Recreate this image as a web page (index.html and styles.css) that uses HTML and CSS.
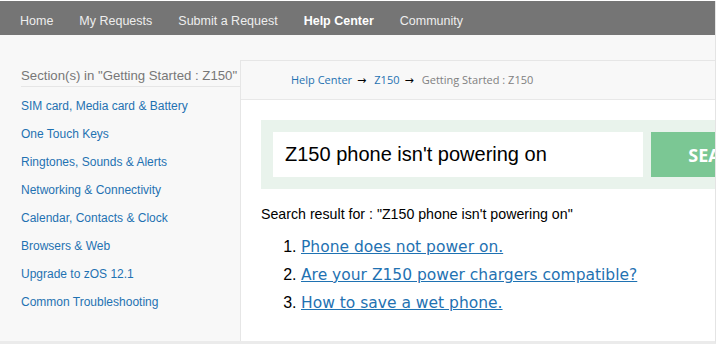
FILE: index.html
```html
<!DOCTYPE html>
<html lang="en">
<head>
    <meta charset="UTF-8">
    <meta name="viewport" content="width=device-width, initial-scale=1.0">
    <title>Help Center - Getting Started : Z150</title>
    <link rel="stylesheet" href="styles.css">
</head>
<body>

<div class="page">
    <nav class="topbar">
        <a href="#">Home</a>
        <a href="#">My Requests</a>
        <a href="#">Submit a Request</a>
        <a href="#" class="active">Help Center</a>
        <a href="#">Community</a>
    </nav>

    <div class="layout">
        <aside class="sidebar">
            <h3>Section(s) in "Getting Started : Z150"</h3>
            <ul class="sections">
                <li><a href="#">SIM card, Media card &amp; Battery</a></li>
                <li><a href="#">One Touch Keys</a></li>
                <li><a href="#">Ringtones, Sounds &amp; Alerts</a></li>
                <li><a href="#">Networking &amp; Connectivity</a></li>
                <li><a href="#">Calendar, Contacts &amp; Clock</a></li>
                <li><a href="#">Browsers &amp; Web</a></li>
                <li><a href="#">Upgrade to zOS 12.1</a></li>
                <li><a href="#">Common Troubleshooting</a></li>
            </ul>
        </aside>

        <main class="panel">
            <div class="breadcrumb">
                <a href="#">Help Center</a><span class="arrow">&rarr;</span><a href="#">Z150</a><span class="arrow">&rarr;</span><span class="current">Getting Started : Z150</span>
            </div>

            <div class="content">
                <form class="search">
                    <input type="text" value="Z150 phone isn't powering on">
                    <button type="submit">SEARCH</button>
                </form>

                <p class="result-title">Search result for : "Z150 phone isn't powering on"</p>
                <ol class="results">
                    <li><a href="#">Phone does not power on.</a></li>
                    <li><a href="#">Are your Z150 power chargers compatible?</a></li>
                    <li><a href="#">How to save a wet phone.</a></li>
                </ol>
            </div>
        </main>
    </div>
</div>

</body>
</html>
```

FILE: styles.css
```css
body {
    margin: 0;
    background: #fff;
    font-family: "Liberation Sans", Arial, sans-serif;
}
a {
    text-decoration: none;
}
.page {
    width: 715px;
    background: #f8f8f8;
    border-right: 1px solid #e4e4e4;
    border-bottom: 3px solid #ebebeb;
}
.topbar {
    margin-top: 1px;
    height: 34px;
    box-sizing: border-box;
    padding: 5px 0 0 20px;
    background: #757575;
    display: flex;
    align-items: center;
    gap: 26px;
    font-size: 12.5px;
}
.topbar a {
    color: #eeeeee;
}
.topbar a.active {
    color: #fff;
    font-weight: bold;
}
.layout {
    display: flex;
    height: 306px;
}
.sidebar {
    width: 219px;
    padding: 33px 0 0 21px;
    flex-shrink: 0;
}
.sidebar h3 {
    margin: 0;
    font-size: 13.2px;
    font-weight: normal;
    line-height: 16px;
    color: #777;
    padding-bottom: 2px;
    border-bottom: 1px solid #e6e6e6;
    white-space: nowrap;
}
.sections {
    list-style: none;
    margin: 0;
    padding: 5px 0 0;
}
.sections li {
    line-height: 28px;
    font-size: 12px;
}
.sections a {
    color: #1f72b2;
}
.panel {
    flex: 1;
    margin-top: 25px;
    border-top: 1px solid #e6e6e6;
    border-left: 1px solid #e6e6e6;
    overflow: hidden;
    display: flex;
    flex-direction: column;
}
.breadcrumb {
    height: 38px;
    line-height: 38px;
    padding-left: 50px;
    border-bottom: 1px solid #e8e8e8;
    font-family: "Open Sans", sans-serif;
    font-size: 11px;
    white-space: nowrap;
}
.breadcrumb a {
    color: #1f72b2;
}
.breadcrumb .arrow {
    font-family: "DejaVu Sans", sans-serif;
    color: #000;
    margin: 0 8px 0 5px;
}
.breadcrumb .current {
    color: #808080;
}
.content {
    flex: 1;
    background: #fff;
    padding: 20px 0 0 20px;
}
.search {
    display: flex;
    gap: 8px;
    width: 560px;
    padding: 12px;
    background: #e9f3ec;
    margin: 0;
}
.search input {
    width: 370px;
    height: 45px;
    box-sizing: border-box;
    border: none;
    padding: 0 12px;
    font-family: "Liberation Sans", Arial, sans-serif;
    font-size: 20px;
    color: #000;
    outline: none;
}
.search button {
    width: 144px;
    height: 45px;
    border: none;
    background: #7bc794;
    color: #fff;
    font-family: "Open Sans", sans-serif;
    font-weight: bold;
    font-size: 18px;
    padding: 0;
}
.result-title {
    margin: 17px 0 0;
    font-size: 14.2px;
    line-height: 17px;
    color: #000;
}
.results {
    margin: 10px 0 0;
    padding-left: 40px;
    font-size: 16px;
}
.results li {
    line-height: 28px;
}
.results a {
    font-family: "DejaVu Sans", sans-serif;
    font-size: 15.5px;
    color: #1f72b2;
    text-decoration: underline;
}
```
